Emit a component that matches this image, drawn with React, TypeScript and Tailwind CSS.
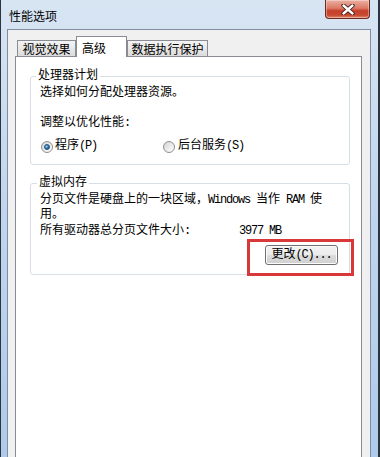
const cjk = "font-['Noto_Sans_CJK_SC',sans-serif]";
const body = "font-['Liberation_Mono','Noto_Sans_CJK_SC',monospace]";

function Lat({ children }: { children: string }) {
  return <span className="tracking-[-1.2px]">{children}</span>;
}

function Radio({ checked }: { checked?: boolean }) {
  return (
    <span className="grid size-[12px] shrink-0 place-items-center rounded-full border border-[#8e8f8f] bg-[linear-gradient(135deg,#d4d4d4,#ffffff)]">
      {checked ? (
        <span className="size-[6px] rounded-full border border-[#1f4f7a] bg-[radial-gradient(circle_at_35%_35%,#8fd0f5,#2a6da6_60%,#163e63)]" />
      ) : null}
    </span>
  );
}

export default function App() {
  return (
    <div className="relative flex h-[457px] w-[380px] flex-col overflow-hidden border-l border-r-2 border-[#2c3440] bg-[linear-gradient(180deg,#d8e5f3,#c3d7ee_40%,#aecbeb)]">
      <div className={`flex h-[29px] shrink-0 items-center pl-[8px] pt-[1px] text-[12px] leading-[15px] text-black ${cjk}`}>
        性能选项
      </div>
      <button
        type="button"
        aria-label="关闭"
        className="absolute right-[8px] top-0 grid h-[19px] w-[45px] place-items-center rounded-b-[4px] border border-t-0 border-[#6a2a22] bg-[linear-gradient(180deg,#eab0a2_0%,#dc7a66_45%,#c63f2b_60%,#c84a33_85%,#e48a6c_100%)] shadow-[inset_0_0_0_1px_rgba(255,255,255,.35)]"
      >
        <svg width="14" height="11" viewBox="0 0 14 11">
          <path d="M2.5 1.5 L11.5 9.5 M11.5 1.5 L2.5 9.5" stroke="#3b1712" strokeWidth="4.2" strokeLinecap="round" />
          <path d="M2.5 1.5 L11.5 9.5 M11.5 1.5 L2.5 9.5" stroke="#ffffff" strokeWidth="2.4" strokeLinecap="round" />
        </svg>
      </button>

      <div className="ml-[6px] mr-[7px] flex flex-1 flex-col border border-b-0 border-[#7f8ea0] bg-[#f0f0f0] pl-[7px] pr-[8px] pt-[6px]">
        <div className={`flex h-[20px] items-end pl-[2px] text-[12px] leading-[15px] text-black ${cjk}`}>
          <div className="flex h-[16px] w-[59px] items-center justify-center border-x border-t border-[#898c95] bg-[linear-gradient(180deg,#f4f4f4,#dcdcdc)]">视觉效果</div>
          <div className="relative z-10 -mb-px flex h-[21px] w-[51px] items-center border-x border-t border-[#898c95] bg-white pl-[5px]">高级</div>
          <div className="flex h-[16px] w-[81px] items-center justify-center border-x border-t border-[#898c95] bg-[linear-gradient(180deg,#f4f4f4,#dcdcdc)]">数据执行保护</div>
        </div>

        <div className={`flex flex-1 flex-col border border-b-0 border-[#898c95] bg-white pl-[14px] pr-[11px] pt-[12px] text-[12px] leading-[15px] text-black ${body}`}>
          <fieldset className="rounded-[3px] border border-[#d5dfe5] px-[9px] pb-[10px]">
            <legend className="-ml-[4px] px-[2px] leading-[15px]">处理器计划</legend>
            <p className="pt-[2px]">选择如何分配处理器资源。</p>
            <p className="mt-[15px]">调整以优化性能<Lat>:</Lat></p>
            <div className="mt-[8px] flex h-[15px] items-center">
              <label className="flex w-[122px] items-center gap-[2px] pl-px">
                <Radio checked />
                <span>程序<Lat>(P)</Lat></span>
              </label>
              <label className="flex items-center gap-[3px] pl-px">
                <Radio />
                <span>后台服务<Lat>(S)</Lat></span>
              </label>
            </div>
          </fieldset>

          <fieldset className="mt-[11px] rounded-[3px] border border-[#d5dfe5] px-[9px] pb-[9px]">
            <legend className="-ml-[3px] px-[2px] leading-[15px]">虚拟内存</legend>
            <p className="whitespace-nowrap pt-[2px]">
              分页文件是硬盘上的一块区域，<Lat>Windows </Lat>当作<Lat> RAM </Lat>使
              <br />
              用。
            </p>
            <div className="mt-px flex">
              <span className="w-[199px]">所有驱动器总分页文件大小<Lat>:</Lat></span>
              <Lat>3977 MB</Lat>
            </div>
            <div className="mt-[6px] flex justify-end pr-[2px]">
              <div className="relative">
                <button
                  type="button"
                  className="flex h-[20px] w-[73px] items-center justify-center rounded-[3px] border border-[#707070] bg-[linear-gradient(180deg,#f2f2f2_0%,#ebebeb_50%,#dddddd_51%,#cfcfcf_100%)] shadow-[inset_0_0_0_1px_#fcfcfc]"
                >
                  更改<Lat>(C)...</Lat>
                </button>
                <div className="pointer-events-none absolute -bottom-[11px] -left-[18px] -right-[16px] -top-[6px] border-[3px] border-[#d8383a]" />
              </div>
            </div>
          </fieldset>
        </div>
      </div>
    </div>
  );
}
